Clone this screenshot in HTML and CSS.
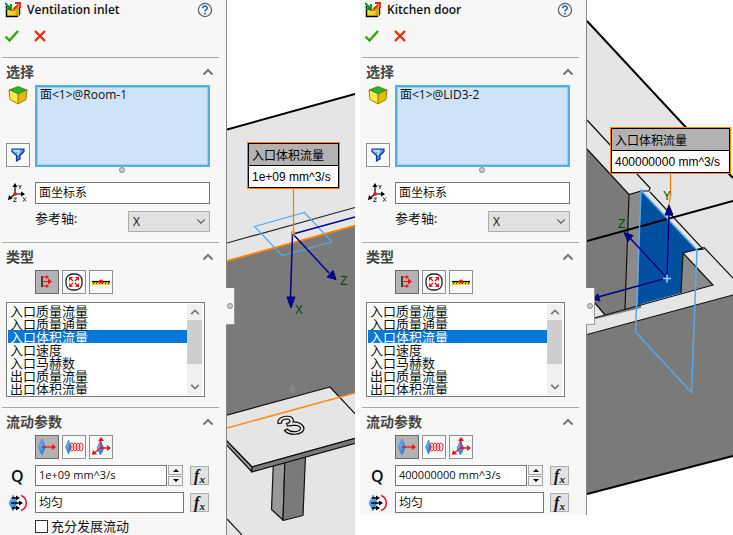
FILE: index.html
```html
<!DOCTYPE html>
<html lang="zh-CN">
<head>
<meta charset="utf-8">
<title>Flow boundary conditions</title>
<link rel="stylesheet" href="styles.css">
</head>
<body>
<svg class="defs" aria-hidden="true">
  <defs>
    <linearGradient id="g-blue" x1="0" y1="0" x2="1" y2="1"><stop offset="0" stop-color="#8fd0ff"/><stop offset="1" stop-color="#0b62c4"/></linearGradient>
    <linearGradient id="g-yellow" x1="0" y1="0" x2="1" y2="1"><stop offset="0" stop-color="#fff36a"/><stop offset="1" stop-color="#eeb400"/></linearGradient>
  </defs>
  <symbol id="i-feature" viewBox="0 0 16 16">
    <path d="M1.500 4v10.500H12L14.500 12V5" fill="url(#g-yellow)" stroke="#000" stroke-width="1.500"/>
    <path d="M12 6h2v8h-2z" fill="#ffd92e" stroke="#8a6a00" stroke-width=".8"/>
    <path d="M4.500 8.500h6" stroke="#a87800"/>
    <path d="M0 1l5 5M6 2v5H1" fill="none" stroke="#008a1e" stroke-width="1.800"/>
    <path d="M8.500 7.500l5-5M10 1h5v5" fill="none" stroke="#e8200c" stroke-width="1.800"/>
  </symbol>
  <symbol id="i-help" viewBox="0 0 16 16">
    <circle cx="8" cy="8" r="6.600" fill="#fafafa" stroke="#56616b" stroke-width="1.200"/>
    <path d="M5.800 6.200C5.800 3.400 10.200 3.500 10.200 6C10.200 7.600 8 7.600 8 9.600" fill="none" stroke="#1d6fae" stroke-width="1.700"/>
    <path d="M7.100 10.700h1.800v1.700H7.100z" fill="#1d6fae"/>
  </symbol>
  <symbol id="i-check" viewBox="0 0 16 16"><path d="M1.500 8.500L5.500 12.500L14 3" fill="none" stroke="#35a00c" stroke-width="2.400"/></symbol>
  <symbol id="i-cross" viewBox="0 0 16 16"><path d="M3 3L13 13M13 3L3 13" fill="none" stroke="#e62b0e" stroke-width="2.400"/></symbol>
  <symbol id="i-up" viewBox="0 0 12 8"><path d="M1.500 6.500L6 2L10.500 6.500" fill="none" stroke="#767676" stroke-width="2"/></symbol>
  <symbol id="i-down" viewBox="0 0 12 8"><path d="M1.500 1.500L6 6L10.500 1.500" fill="none" stroke="#555" stroke-width="1.300"/></symbol>
  <symbol id="i-cube" viewBox="0 0 20 20">
    <path d="M1 5L10 9V19L2 14.500z" fill="#ffe93d"/><path d="M19 5L10 9V19L18 14.500z" fill="#edb900"/>
    <path d="M1 5L10 1.500L19 5L10 9z" fill="#1cba28"/>
    <path d="M1 5L10 1.500L19 5L18 14.500L10 19L2 14.500zM1 5L10 9L19 5M10 9V19" fill="none" stroke="#846400" stroke-width=".8"/>
    <path d="M2.500 6.800L9 9.700" stroke="#fff9b0" stroke-width="1"/>
  </symbol>
  <symbol id="i-filter" viewBox="0 0 16 16">
    <path d="M2 2h12v2.500L10 8.500V12L6.500 14V8.500L2 4.500z" fill="url(#g-blue)" stroke="#0c2fa8" stroke-width="1.200"/>
    <path d="M4 3.800h5L8 8" fill="none" stroke="#e3f5ff" stroke-width="1.300"/>
  </symbol>
  <symbol id="i-axes" viewBox="0 0 20 20">
    <path d="M7 11V2M7 11H16M7 11L1.500 15.500" stroke="#000" stroke-width="1.200" fill="none"/>
    <path d="M7 0l2.500 4h-5zM17 11l-4-2.500v5zM0 17l1-5 3.500 3.800z"/>
    <circle cx="7" cy="11" r="1.800" fill="#f01010"/>
    <path d="M10.500 2l1.500 2 1.500-2M12 4v2M15 14.500l3 4M18 14.500l-3 4M5.500 15h3l-3 3.500h3" fill="none" stroke="#222" stroke-width=".9"/>
  </symbol>
  <symbol id="i-inlet" viewBox="0 0 20 20">
    <path d="M5 4v11" stroke="#000" stroke-width="1.300"/>
    <path d="M5.500 5H10M5.500 9.500H13M5.500 14H10" stroke="#f01010" stroke-width="1.200"/>
    <path d="M9 3l3 2-3 2zM11 6.500l4 3-4 3zM9 12l3 2-3 2z" fill="#f01010"/>
  </symbol>
  <symbol id="i-pressure" viewBox="0 0 20 20">
    <rect x="2" y="2" width="16" height="16" rx="6.500" fill="#fff" stroke="#222" stroke-width="1.300"/>
    <path d="M5 5h4L5 9zM15 5h-4l4 4zM5 15h4l-4-4zM15 15h-4l4-4z" fill="#f01010"/>
    <path d="M6 6l3 3M14 6l-3 3M6 14l3-3M14 14l-3-3" stroke="#f01010" stroke-width="1.300"/>
  </symbol>
  <symbol id="i-wall" viewBox="0 0 20 20">
    <path d="M1 10h18v3H1z" fill="#ffdc12"/><path d="M1 9.500h18" stroke="#000" stroke-width="1.200"/>
    <path d="M2 12l1.500-2M5 12l1.500-2M8 12l1.500-2M11 12l1.500-2M14 12l1.500-2M17 12l1.500-2" stroke="#000" stroke-width=".8"/>
    <circle cx="10" cy="9.500" r="2" fill="#f01010"/>
  </symbol>
  <symbol id="i-normal" viewBox="0 0 20 20">
    <path d="M5 2L8.500 10L5 18L1.500 10z" fill="url(#g-blue)" stroke="#1478d4" stroke-width=".6"/>
    <path d="M5 10h11" stroke="#f01010" stroke-width="1.300"/><path d="M15 7l4 3-4 3z" fill="#f01010"/>
  </symbol>
  <symbol id="i-swirl" viewBox="0 0 20 20">
    <path d="M4.500 3L7.500 10L4.500 17L1.500 10z" fill="url(#g-blue)" stroke="#1478d4" stroke-width=".6"/>
    <g fill="none" stroke="#f01010" stroke-width=".9"><ellipse cx="8" cy="10" rx="2" ry="4"/><ellipse cx="11" cy="10" rx="2" ry="4"/><ellipse cx="14" cy="10" rx="2" ry="4"/><ellipse cx="17" cy="10" rx="2" ry="4"/></g>
  </symbol>
  <symbol id="i-vector" viewBox="0 0 20 20">
    <path d="M9 4L13 11L9.500 18L6 11z" fill="url(#g-blue)" stroke="#1478d4" stroke-width=".6"/>
    <path d="M10 11V2M10 11h7M10 11l-7 5" stroke="#f01010" stroke-width="1.300" fill="none"/>
    <path d="M10 0l3 4H7zM20 11l-4-3v6zM1 18l1-5 4 4z" fill="#f01010"/>
  </symbol>
  <symbol id="i-profile" viewBox="0 0 20 20">
    <path d="M5 2L9 10L5 18L1 10z" fill="url(#g-blue)" stroke="#1478d4" stroke-width=".6"/>
    <path d="M4 5h5M3 10h10M4 15h5" stroke="#000" stroke-width="1.300"/>
    <path d="M8 2.500l4 2.500-4 2.500zM11 7.500l4 2.500-4 2.500zM8 12.500l4 2.500-4 2.500z"/>
    <path d="M13 2.500C20 5 20 15 13 17.500" fill="none" stroke="#e3142c" stroke-width="1.500"/>
  </symbol>
  <symbol id="i-tri" viewBox="0 0 6 4"><path d="M0 4l3-3 3 3z"/></symbol>
</svg>

<main class="board">
  <section class="view view-tall">
    <form class="panel">
      <header class="title"><svg><use href="#i-feature"/></svg><h1>Ventilation inlet</h1><button type="button" class="plain" aria-label="Help"><svg><use href="#i-help"/></svg></button></header>
      <div class="actions"><button type="button" class="plain" aria-label="OK"><svg><use href="#i-check"/></svg></button><button type="button" class="plain" aria-label="Cancel"><svg><use href="#i-cross"/></svg></button></div>

      <section class="group">
        <h2>选择<svg><use href="#i-up"/></svg></h2>
        <div class="pick">
          <div class="pick-side"><svg class="glyph"><use href="#i-cube"/></svg><button type="button" class="tool" aria-label="Filter"><svg><use href="#i-filter"/></svg></button></div>
          <textarea class="faces" aria-label="Faces" readonly>面&lt;1&gt;@Room-1</textarea>
        </div>
        <div class="grip"><i class="dot"></i></div>
        <div class="row"><label for="cs1"><svg class="glyph"><use href="#i-axes"/></svg></label><input id="cs1" class="box" aria-label="Coordinate system" value="面坐标系"></div>
        <div class="row axis"><label for="ax1">参考轴:</label><span class="drop"><select id="ax1"><option>X</option></select><svg><use href="#i-down"/></svg></span></div>
      </section>

      <section class="group">
        <h2>类型<svg><use href="#i-up"/></svg></h2>
        <div class="tools"><button type="button" class="tool on" aria-label="Flow openings"><svg><use href="#i-inlet"/></svg></button><button type="button" class="tool" aria-label="Pressure openings"><svg><use href="#i-pressure"/></svg></button><button type="button" class="tool" aria-label="Wall"><svg><use href="#i-wall"/></svg></button></div>
        <div class="list">
          <select size="7" aria-label="Type"><option>入口质量流量</option><option>入口质量通量</option><option selected>入口体积流量</option><option>入口速度</option><option>入口马赫数</option><option>出口质量流量</option><option>出口体积流量</option></select>
          <div class="scroll"><svg><use href="#i-up"/></svg><i class="thumb"></i><svg class="flip"><use href="#i-up"/></svg></div>
        </div>
      </section>

      <section class="group">
        <h2>流动参数<svg><use href="#i-up"/></svg></h2>
        <div class="tools"><button type="button" class="tool on" aria-label="Normal to face"><svg><use href="#i-normal"/></svg></button><button type="button" class="tool" aria-label="Swirl"><svg><use href="#i-swirl"/></svg></button><button type="button" class="tool" aria-label="3D vector"><svg><use href="#i-vector"/></svg></button></div>
        <div class="row"><label class="q" for="q1">Q</label><input id="q1" class="box amount" value="1e+09 mm^3/s"><span class="spin"><button type="button" aria-label="Increase"><svg><use href="#i-tri"/></svg></button><button type="button" aria-label="Decrease"><svg class="flip"><use href="#i-tri"/></svg></button></span><button type="button" class="fx"><i>f</i><sub>x</sub></button></div>
        <div class="row"><label for="p1"><svg class="glyph"><use href="#i-profile"/></svg></label><input id="p1" class="box" aria-label="Profile" value="均匀"><button type="button" class="fx"><i>f</i><sub>x</sub></button></div>
        <label class="tick"><input type="checkbox">充分发展流动</label>
      </section>
      <div class="tab"><i class="dot"></i></div>
    </form>

    <svg class="scene" viewBox="227 0 128 535" preserveAspectRatio="xMinYMin slice" role="img" aria-label="Room model">
      <rect x="227" y="0" width="128" height="535" fill="#fff"/>
      <path d="M227 129L355 94V535H227z" fill="#e5e5e5"/>
      <path d="M227 261L355 226V393L227 428z" fill="#7a7a7a"/>
      <path d="M227 129.500L355 94" stroke="#000" stroke-width="2"/>
      <path d="M227 243L355 207.500M227 519L242 535" stroke="#222" stroke-width="1.200"/>
      <path d="M227 261L355 225.500" stroke="#ff8000" stroke-width="1.800"/>
      <path d="M289 389h7M292.500 385v8M290 386l5 6M295 386l-5 6" stroke="#8c8c8c" stroke-width="1"/>
      <g stroke="#111" stroke-width="1.200" stroke-linejoin="round">
        <path d="M273.500 460L285 458L283 520L271.500 509.500z" fill="#999"/>
        <path d="M285 458L305.500 455L303 515.500L283 520.500z" fill="#7a7a7a"/>
        <path d="M220 417L330 387L360 419V437L252 467L220 434z" fill="#e5e5e5"/>
        <path d="M220 434L252 467V472L220 438z" fill="#999"/>
        <path d="M252 467L360 437V442L252 472z" fill="#7a7a7a"/>
      </g>
      <path d="M227 428L355 393" stroke="#ff8c1a" stroke-width="1.500"/>
      <path d="M278 423.500C277 418 284 415.500 290 416.500C293 417.500 294 420 293 422C299 421.500 304 425 304 429C302 435.500 289 436 284.500 430.500L287 429C291 433 300 432 300.500 428.500C300.500 424.500 292 425 287.500 426L286.500 423.500C291 423 291 419.500 287 419C283 419 281 421 281.500 423z" fill="#e5e5e5" stroke="#111" stroke-width="1.200"/>
      <path d="M254.500 226.500L304.500 212.500L332 242L282 255.500z" fill="none" stroke="#55a8ee" stroke-width="1.200"/>
      <path d="M293 234L355 217M293 234L329 273M292.500 234L290.500 297" stroke="#00008c" stroke-width="1.500"/>
      <path d="M336 279.500L327 277L333 270.500z M287 297h8l-4 11z" fill="#0000a0" stroke="#000070"/>
      <path d="M293.500 189V234" stroke="#ff8000" stroke-width="1.300"/>
      <rect x="291.500" y="232" width="3" height="3" fill="none" stroke="#ff8000"/>
      <rect x="247.500" y="142.500" width="92" height="46" fill="#fff" stroke="#ff8000"/>
      <rect x="248.500" y="143.500" width="90" height="44" fill="#fff" stroke="#000"/>
      <path d="M249 144h89v21h-89z" fill="#b2b2b2"/><path d="M248 165.500h91" stroke="#000"/>
      <text class="tag" x="252" y="160">入口体积流量</text>
      <text class="tag" x="252" y="181">1e+09 mm^3/s</text>
      <text class="axis-name" x="340" y="285">Z</text>
      <text class="axis-name" x="295" y="314">X</text>
    </svg>
  </section>

  <section class="view view-short">
    <form class="panel">
      <header class="title"><svg><use href="#i-feature"/></svg><h1>Kitchen door</h1><button type="button" class="plain" aria-label="Help"><svg><use href="#i-help"/></svg></button></header>
      <div class="actions"><button type="button" class="plain" aria-label="OK"><svg><use href="#i-check"/></svg></button><button type="button" class="plain" aria-label="Cancel"><svg><use href="#i-cross"/></svg></button></div>

      <section class="group">
        <h2>选择<svg><use href="#i-up"/></svg></h2>
        <div class="pick">
          <div class="pick-side"><svg class="glyph"><use href="#i-cube"/></svg><button type="button" class="tool" aria-label="Filter"><svg><use href="#i-filter"/></svg></button></div>
          <textarea class="faces" aria-label="Faces" readonly>面&lt;1&gt;@LID3-2</textarea>
        </div>
        <div class="grip"><i class="dot"></i></div>
        <div class="row"><label for="cs2"><svg class="glyph"><use href="#i-axes"/></svg></label><input id="cs2" class="box" aria-label="Coordinate system" value="面坐标系"></div>
        <div class="row axis"><label for="ax2">参考轴:</label><span class="drop"><select id="ax2"><option>X</option></select><svg><use href="#i-down"/></svg></span></div>
      </section>

      <section class="group">
        <h2>类型<svg><use href="#i-up"/></svg></h2>
        <div class="tools"><button type="button" class="tool on" aria-label="Flow openings"><svg><use href="#i-inlet"/></svg></button><button type="button" class="tool" aria-label="Pressure openings"><svg><use href="#i-pressure"/></svg></button><button type="button" class="tool" aria-label="Wall"><svg><use href="#i-wall"/></svg></button></div>
        <div class="list">
          <select size="7" aria-label="Type"><option>入口质量流量</option><option>入口质量通量</option><option selected>入口体积流量</option><option>入口速度</option><option>入口马赫数</option><option>出口质量流量</option><option>出口体积流量</option></select>
          <div class="scroll"><svg><use href="#i-up"/></svg><i class="thumb"></i><svg class="flip"><use href="#i-up"/></svg></div>
        </div>
      </section>

      <section class="group">
        <h2>流动参数<svg><use href="#i-up"/></svg></h2>
        <div class="tools"><button type="button" class="tool on" aria-label="Normal to face"><svg><use href="#i-normal"/></svg></button><button type="button" class="tool" aria-label="Swirl"><svg><use href="#i-swirl"/></svg></button><button type="button" class="tool" aria-label="3D vector"><svg><use href="#i-vector"/></svg></button></div>
        <div class="row"><label class="q" for="q2">Q</label><input id="q2" class="box amount" value="400000000 mm^3/s"><span class="spin"><button type="button" aria-label="Increase"><svg><use href="#i-tri"/></svg></button><button type="button" aria-label="Decrease"><svg class="flip"><use href="#i-tri"/></svg></button></span><button type="button" class="fx"><i>f</i><sub>x</sub></button></div>
        <div class="row"><label for="p2"><svg class="glyph"><use href="#i-profile"/></svg></label><input id="p2" class="box" aria-label="Profile" value="均匀"><button type="button" class="fx"><i>f</i><sub>x</sub></button></div>
      </section>
      <div class="tab"><i class="dot"></i></div>
    </form>

    <svg class="scene" viewBox="587 0 146 515" preserveAspectRatio="xMinYMin slice" role="img" aria-label="Door model">
      <rect x="587" y="0" width="146" height="515" fill="#fff"/>
      <path d="M587 21L733 178V456L587 494z" fill="#e5e5e5"/>
      <path d="M587 149L629 194.500L641 191V308L587 321z" fill="#7a7a7a"/>
      <path d="M629 194.500L641 191L638 305L625 309z" fill="#8a8a8a"/>
      <path d="M587 294L605 315L587 320z" fill="#e5e5e5"/>
      <path d="M683 253L713 285L681 293z" fill="#8a8a8a"/>
      <path d="M587 334.500L733 295V456L587 494z" fill="#7a7a7a"/>
      <path d="M641 190.500L697 250L683 253L681 293L638 305z" fill="#0050a0"/>
      <path d="M587 21L733 178" stroke="#000" stroke-width="2"/>
      <path d="M587 494L733 456" stroke="#000" stroke-width="2"/>
      <path d="M587 120L650 188L649 191L641 191L629 194.500L587 149M629 194.500L625 309M595 303L605 315M587 320L713 285L683 253L681 293M683 253L704 247.500M650 192L703 249L697 250M704 247.500L733 278M587 334.500L733 295" fill="none" stroke="#111" stroke-width="1.200"/>
      <path d="M587 241L733 201" stroke="#000" stroke-width="2"/>
      <path d="M641 190.500L635.500 332L691.500 392.500L697 250z" fill="none" stroke="#55a8ee" stroke-width="1.500"/>
      <path d="M667 278L669 213M667 278L630 238M667 278L598 297" stroke="#00008c" stroke-width="1.500"/>
      <path d="M669 205l4 10h-8zM624 232.500l9 3-5 6zM592 299l6-5 2 7z" fill="#0000a0" stroke="#000070"/>
      <path d="M663 278.500h8M667 274.500v8" stroke="#9bd3ff" stroke-width="1.500"/>
      <path d="M670.500 174V195L669 205" fill="none" stroke="#ff8000" stroke-width="1.300"/>
      <rect x="610.500" y="127.500" width="120" height="46" fill="#fff" stroke="#ff8000"/>
      <rect x="611.500" y="128.500" width="118" height="44" fill="#fff" stroke="#000"/>
      <path d="M612 129h117v21H612z" fill="#b2b2b2"/><path d="M611 150.500h119" stroke="#000"/>
      <text class="tag" x="615" y="145">入口体积流量</text>
      <text class="tag" x="615" y="166">400000000 mm^3/s</text>
      <text class="axis-name" x="663" y="200">Y</text>
      <text class="axis-name" x="618" y="228">Z</text>
    </svg>
  </section>
</main>
</body>
</html>
```
FILE: styles.css
```css
* { box-sizing: border-box; }

body {
  margin: 0;
  background: #fff;
  color: #111;
  font: 12px/16px "Open Sans", "Noto Sans CJK SC", sans-serif;
  overflow: hidden;
}

button, input, select, textarea {
  margin: 0;
  padding: 0;
  border: 0;
  border-radius: 0;
  outline: 0;
  color: inherit;
  font: inherit;
}

.defs { position: absolute; width: 0; height: 0; }

.board {
  display: grid;
  grid-template-columns: minmax(0, 355fr) minmax(0, 373fr);
  gap: 5px;
  align-items: start;
}

.view { display: flex; overflow: hidden; }
.view-tall { height: 100vh; }
.view-short { height: calc(100vh - 20px); }

.scene { flex: 1; min-width: 0; height: 100%; }

.panel {
  position: relative;
  flex: none;
  width: 227px;
  background: #f7f7f7;
  border-right: 1px solid #888;
}

.title { display: flex; align-items: center; height: 20px; padding: 0 13px 0 5px; }
.title svg { width: 16px; height: 16px; display: block; }
.title h1 { flex: 1; margin: 0 0 0 6px; font-size: 12px; font-weight: 600; color: #111; }

.plain { background: none; }

.actions { display: flex; gap: 12px; align-items: center; height: 32px; margin-bottom: 5px; padding-left: 4px; }
.actions svg { display: block; width: 16px; height: 16px; }

.group { margin: 0 7px 0 2px; padding: 0 9px 10px 4px; border-top: 1px solid #a8a8a8; }
.group h2 {
  display: flex;
  justify-content: space-between;
  align-items: center;
  height: 27px;
  margin: 0 -4px 0 0;
  font-size: 14px;
  font-weight: 700;
  color: #444;
}
.group h2 svg { width: 12px; height: 8px; }

.glyph { display: block; width: 20px; height: 20px; margin-left: 2px; }

.pick { display: flex; gap: 5px; height: 82px; }
.pick-side { display: flex; flex-direction: column; justify-content: space-between; width: 24px; }
.faces {
  flex: 1;
  min-width: 0;
  padding: 0 3px;
  background: #cfe3f8;
  border: 2px solid #55aee3;
  box-shadow: inset 0 0 0 1px #9ccbef;
  resize: none;
}

.grip { display: flex; justify-content: center; height: 15px; padding: 0 0 0 27px; }
.dot { width: 6px; height: 6px; border: 1px solid #8d8d8d; border-radius: 50%; background: #ccc; }

.row { display: flex; align-items: center; height: 21px; margin-bottom: 6px; }
.row > label { flex: none; width: 29px; }
.row > .q { padding-left: 5px; font-size: 16px; font-weight: 600; }
.grip + .row { height: 22px; margin-bottom: 7px; }

.box {
  flex: 1;
  min-width: 0;
  height: 100%;
  padding: 0 3px 2px;
  background: #fff;
  border: 1px solid #767676;
}
.amount { font-size: 11px; }

.group .axis { margin: 0; justify-content: space-between; padding-left: 29px; }
.group .axis label { width: auto; padding-bottom: 8px; font-size: 13px; }
.drop { position: relative; width: 82px; height: 21px; }
.drop select {
  width: 100%;
  height: 100%;
  padding-left: 4px;
  appearance: none;
  background: #e1e1e1;
  border: 1px solid #adadad;
}
.drop svg { position: absolute; right: 4px; top: 7px; width: 10px; height: 7px; pointer-events: none; }

.tools { display: flex; gap: 3px; padding-left: 29px; margin-bottom: 6px; }
.tool {
  display: grid;
  place-items: center;
  width: 24px;
  height: 24px;
  background: #f9f9f9;
  border: 1px solid #8f8f8f;
}
.tool svg { width: 20px; height: 20px; }
.pick .tool svg { width: 16px; height: 16px; }
.tool.on { background: #b3b3b3; border-color: #6a6a6a; }

.list {
  display: flex;
  height: 95px;
  margin: 8px 5px 0 0;
  padding: 1px 2px 1px 1px;
  background: #fff;
  border: 1px solid #767b85;
}
.list select { flex: 1; min-width: 0; height: 91px; background: #fff; overflow: hidden; font-size: 13px; }
.list option {
  display: flex;
  align-items: center;
  height: 13px;
  min-height: 0;
  padding: 0 2px;
  font: 13px/13px "Noto Sans CJK SC", sans-serif;
  overflow: visible;
}
.list option:checked { background: #0078d7 linear-gradient(#0078d7, #0078d7); color: #fff; }
.scroll { display: flex; flex-direction: column; align-items: center; width: 15px; background: #f0f0f0; }
.scroll svg { width: 10px; height: 16px; }
.thumb { width: 100%; height: 44px; margin-bottom: auto; background: #cdcdcd; }
.flip { transform: rotate(180deg); }

.spin { display: flex; flex-direction: column; gap: 1px; width: 15px; margin: 0 1px; }
.spin button { display: grid; place-items: center; height: 10px; background: #f3f3f3; border: 1px solid #a5a5a5; }
.spin svg { width: 6px; height: 4px; }

.fx {
  width: 19px;
  height: 19px;
  margin: 0 1px 0 6px;
  background: #e1e1e1;
  border: 1px solid #adadad;
  font: italic bold 16px/14px "Liberation Serif", serif;
  white-space: nowrap;
}
.fx sub { font-size: 11px; line-height: 0; vertical-align: -2px; }

.tick { display: flex; align-items: center; gap: 3px; height: 14px; margin: 0 0 0 29px; font-size: 13px; white-space: nowrap; }
.tick input { width: 13px; height: 13px; appearance: none; background: #fff; border: 1px solid #333; }

.tab {
  position: absolute;
  left: 226px;
  top: 288px;
  display: grid;
  place-items: center;
  width: 9px;
  height: 37px;
  background: #f7f7f7;
  border-bottom: 1px solid #999;
  border-right: 1px solid #999;
}

.tag { font: 12px "Liberation Sans", "Noto Sans CJK SC", sans-serif; fill: #000; }
.axis-name { font: 12px "Liberation Sans", sans-serif; fill: #004d00; }
```
